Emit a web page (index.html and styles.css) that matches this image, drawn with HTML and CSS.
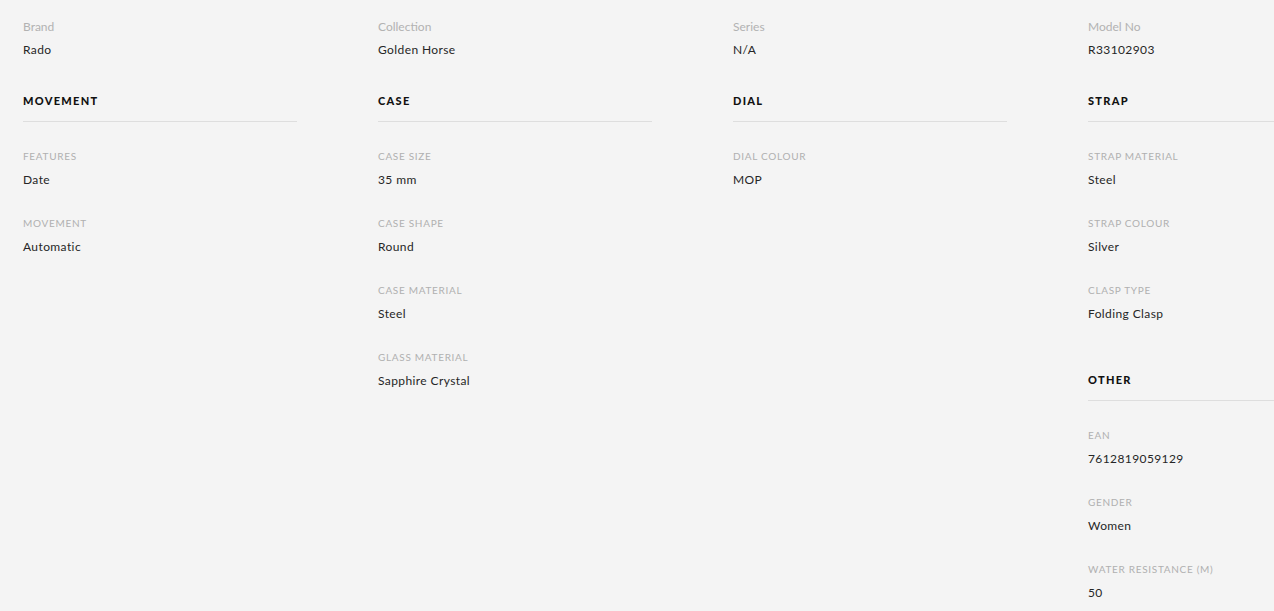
FILE: index.html
```html
<!DOCTYPE html>
<html>
<head>
<meta charset="utf-8">
<link rel="stylesheet" href="styles.css">
</head>
<body>
<div class="specs">
  <div class="col">
    <div class="top"><div class="tlabel">Brand</div><div class="value">Rado</div></div>
    <section class="sec">
      <h3 class="head">MOVEMENT</h3>
      <div class="field"><div class="label">Features</div><div class="value">Date</div></div>
      <div class="field"><div class="label">Movement</div><div class="value">Automatic</div></div>
    </section>
  </div>
  <div class="col">
    <div class="top"><div class="tlabel">Collection</div><div class="value">Golden Horse</div></div>
    <section class="sec">
      <h3 class="head">CASE</h3>
      <div class="field"><div class="label">Case Size</div><div class="value">35 mm</div></div>
      <div class="field"><div class="label">Case Shape</div><div class="value">Round</div></div>
      <div class="field"><div class="label">Case Material</div><div class="value">Steel</div></div>
      <div class="field"><div class="label">Glass Material</div><div class="value">Sapphire Crystal</div></div>
    </section>
  </div>
  <div class="col">
    <div class="top"><div class="tlabel">Series</div><div class="value">N/A</div></div>
    <section class="sec">
      <h3 class="head">DIAL</h3>
      <div class="field"><div class="label">Dial Colour</div><div class="value">MOP</div></div>
    </section>
  </div>
  <div class="col">
    <div class="top"><div class="tlabel">Model No</div><div class="value">R33102903</div></div>
    <section class="sec">
      <h3 class="head">STRAP</h3>
      <div class="field"><div class="label">Strap Material</div><div class="value">Steel</div></div>
      <div class="field"><div class="label">Strap Colour</div><div class="value">Silver</div></div>
      <div class="field"><div class="label">Clasp Type</div><div class="value">Folding Clasp</div></div>
    </section>
    <section class="sec">
      <h3 class="head">OTHER</h3>
      <div class="field"><div class="label">EAN</div><div class="value">7612819059129</div></div>
      <div class="field"><div class="label">Gender</div><div class="value">Women</div></div>
      <div class="field"><div class="label">Water Resistance (M)</div><div class="value">50</div></div>
    </section>
  </div>
</div>
</body>
</html>
```
FILE: styles.css
```css
html, body {
  margin: 0;
  padding: 0;
  background: #f4f4f4;
  overflow: hidden;
}
body {
  font-family: Lato, "Open Sans", sans-serif;
  color: #222;
}
.specs {
  display: grid;
  grid-template-columns: repeat(4, 274px);
  column-gap: 81px;
  padding: 19px 0 0 23px;
  width: 1400px;
}
.col {
  display: flex;
  flex-direction: column;
}
.top {
  display: flex;
  flex-direction: column;
  gap: 7px;
  margin-bottom: 35px;
}
.tlabel {
  font-size: 12px;
  line-height: 16px;
  color: #b2b2b2;
}
.value {
  font-size: 12px;
  line-height: 16px;
  color: #262626;
  letter-spacing: 0.4px;
}
.sec {
  margin-bottom: 23px;
}
.head {
  margin: 0 0 26px;
  font-size: 11px;
  line-height: 16px;
  font-weight: 900;
  letter-spacing: 1.3px;
  color: #111;
  padding-bottom: 12px;
  border-bottom: 1px solid #dedede;
}
.field {
  display: flex;
  flex-direction: column;
  gap: 8px;
  margin-bottom: 27px;
}
.label {
  font-size: 10px;
  line-height: 16px;
  text-transform: uppercase;
  letter-spacing: 0.7px;
  color: #b0b0b0;
}
```
